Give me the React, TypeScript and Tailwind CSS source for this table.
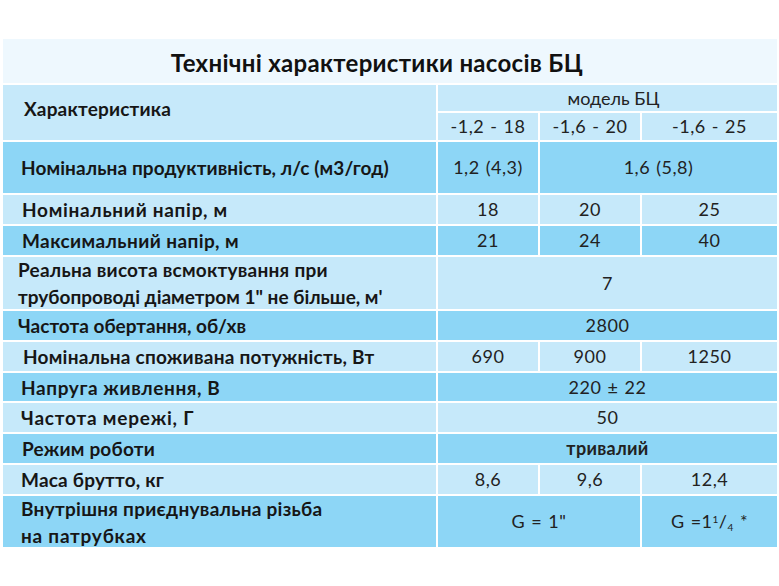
const light = "bg-[#c6e9fa]";
const dark = "bg-[#8dd6f6]";

const Label = ({ children, bg, className = "" }: { children: React.ReactNode; bg: string; className?: string }) => (
  <div className={`${bg} flex items-center font-bold text-[19px] leading-[27px] text-[#161616] whitespace-nowrap ${className}`}>{children}</div>
);

const Val = ({ children, bg, className = "" }: { children: React.ReactNode; bg: string; className?: string }) => (
  <div className={`${bg} flex items-center justify-center text-[18px] text-[#222] whitespace-nowrap ${className}`}>{children}</div>
);

// values in the reference have wide commas and spaces
const num = "tracking-[0.5px] [word-spacing:1px]";

export default function App() {
  return (
    <div className="w-[779px] h-[586px] bg-white pt-[39px] pl-[3px] font-['Lato','Liberation_Sans',sans-serif]">
      <div className="w-[774px]">
        <div className="h-[44px] mb-[2px] bg-[#eef8fe] flex items-center justify-center pr-[26px] pt-[4px] text-[24px] tracking-[0.3px] font-bold text-[#111]">
          Технічні характеристики насосів БЦ
        </div>
        <div className="grid grid-cols-[433px_100px_100px_135px] grid-rows-[26px_27px_51px_29px_29px_52px_29px_29px_28px_29px_29px_29px_51px] gap-[2px]">
          <Label bg={light} className="row-span-2 pl-[21px] pb-[8px] tracking-[0.2px]">Характеристика</Label>
          <Val bg={light} className="col-span-3 text-[16px] pl-[12px]">модель БЦ</Val>
          <Val bg={light} className={num}>-1,2 - 18</Val>
          <Val bg={light} className={num}>-1,6 - 20</Val>
          <Val bg={light} className={num}>-1,6 - 25</Val>

          <Label bg={dark} className="pl-[18px] tracking-[0.1px]">Номінальна продуктивність, л/с (м3/год)</Label>
          <Val bg={dark} className={num}>1,2 (4,3)</Val>
          <Val bg={dark} className={`col-span-2 ${num}`}>1,6 (5,8)</Val>

          <Label bg={light} className="pl-[19px] tracking-[0.7px]">Номінальний напір, м</Label>
          <Val bg={light} className={num}>18</Val>
          <Val bg={light} className={num}>20</Val>
          <Val bg={light} className={num}>25</Val>

          <Label bg={dark} className="pl-[19px] tracking-[0.4px]">Максимальний напір, м</Label>
          <Val bg={dark} className={num}>21</Val>
          <Val bg={dark} className={num}>24</Val>
          <Val bg={dark} className={num}>40</Val>

          <Label bg={light} className="pl-[15px]">
            <span>
              <span className="tracking-[0.25px]">Реальна висота всмоктування при</span>
              <br />
              трубопроводі діаметром 1" не більше, м'
            </span>
          </Label>
          <Val bg={light} className={`col-span-3 ${num}`}>7</Val>

          <Label bg={dark} className="pl-[15px]">Частота обертання, об/хв</Label>
          <Val bg={dark} className={`col-span-3 ${num}`}>2800</Val>

          <Label bg={light} className="pl-[20px] tracking-[0.25px]">Номінальна споживана потужність, Вт</Label>
          <Val bg={light} className={num}>690</Val>
          <Val bg={light} className={num}>900</Val>
          <Val bg={light} className={num}>1250</Val>

          <Label bg={dark} className="pl-[18px] tracking-[0.6px]">Напруга живлення, В</Label>
          <Val bg={dark} className={`col-span-3 ${num}`}>220 ± 22</Val>

          <Label bg={light} className="pl-[18px] tracking-[0.8px]">Частота мережі, Г</Label>
          <Val bg={light} className={`col-span-3 ${num}`}>50</Val>

          <Label bg={dark} className="pl-[19px] tracking-[0.2px]">Режим роботи</Label>
          <Val bg={dark} className="col-span-3 font-bold text-[18px] tracking-[0.3px] text-[#111]">тривалий</Val>

          <Label bg={light} className="pl-[18px] tracking-[0.2px]">Маса брутто, кг</Label>
          <Val bg={light} className={num}>8,6</Val>
          <Val bg={light} className={num}>9,6</Val>
          <Val bg={light} className={num}>12,4</Val>

          <Label bg={dark} className="pl-[18px] tracking-[0.27px]">
            <span>
              Внутрішня приєднувальна різьба
              <br />
              <span className="tracking-[0.75px]">на патрубках</span>
            </span>
          </Label>
          <Val bg={dark} className={`col-span-2 ${num}`}>G = 1"</Val>
          <Val bg={dark} className={num}>
            <span>
              G =1<sup className="text-[10px]">1</sup>/<sub className="text-[10px]">4</sub> *
            </span>
          </Val>
        </div>
      </div>
    </div>
  );
}
